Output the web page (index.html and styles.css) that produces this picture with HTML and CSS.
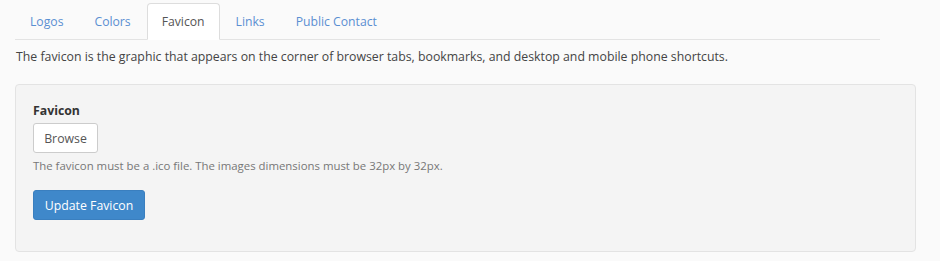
FILE: index.html
```html
<!DOCTYPE html>
<html lang="en">
<head>
  <meta charset="UTF-8" />
  <title>Branding</title>
  <link rel="stylesheet" href="styles.css">
</head>
<body>
  <div class="page">
    <ul class="tabs">
      <li class="tab"><a href="#">Logos</a></li>
      <li class="tab"><a href="#">Colors</a></li>
      <li class="tab active"><a href="#">Favicon</a></li>
      <li class="tab"><a href="#">Links</a></li>
      <li class="tab"><a href="#">Public Contact</a></li>
    </ul>

    <p class="intro">The favicon is the graphic that appears on the corner of browser tabs, bookmarks, and desktop and mobile phone shortcuts.</p>

    <div class="well">
      <label class="field-label">Favicon</label>
      <button class="btn btn-default">Browse</button>
      <p class="help">The favicon must be a .ico file. The images dimensions must be 32px by 32px.</p>
      <button class="btn btn-primary">Update Favicon</button>
    </div>
  </div>
</body>
</html>
```

FILE: styles.css
```css
* {
  margin: 0;
  padding: 0;
  box-sizing: border-box;
  font-family: 'Open Sans', 'Liberation Sans', sans-serif;
}

body {
  background: #fafafa;
  color: #444;
  font-size: 12.3px;
}

.page {
  padding: 3px 24px 0 15px;
}

.tabs {
  list-style: none;
  display: flex;
  width: 865px;
  border-bottom: 1px solid #e3e3e3;
}

.tab {
  margin-right: 1px;
  margin-bottom: -1px;
}

.tab a {
  display: block;
  padding: 8px 14px;
  line-height: 19px;
  font-size: 12.2px;
  color: #5a8fd2;
  text-decoration: none;
  border: 1px solid transparent;
  border-radius: 4px 4px 0 0;
}

.tab.active a {
  color: #555;
  background: #fff;
  border-color: #ddd;
  border-bottom-color: #fff;
}

.intro {
  margin: 7px 0 17px 1px;
  line-height: 20px;
  color: #444;
}

.well {
  width: 901px;
  background: #f4f4f4;
  border: 1px solid #e3e3e3;
  border-radius: 4px;
  padding: 16px 17px 31px;
  display: flex;
  flex-direction: column;
  align-items: flex-start;
}

.field-label {
  font-weight: bold;
  color: #333;
  line-height: 20px;
  margin-bottom: 2px;
}

.btn {
  height: 30px;
  font-size: 12.3px;
  border-radius: 3px;
  cursor: pointer;
  padding: 0;
  white-space: nowrap;
}

.btn-default {
  width: 65px;
  background: #fff;
  color: #555;
  border: 1px solid #ccc;
}

.help {
  font-size: 11.4px;
  color: #777;
  line-height: 17px;
  margin: 4px 0 16px;
}

.btn-primary {
  width: 112px;
  background: #3f88ca;
  color: #fff;
  border: 1px solid #3a7fbf;
}
```
